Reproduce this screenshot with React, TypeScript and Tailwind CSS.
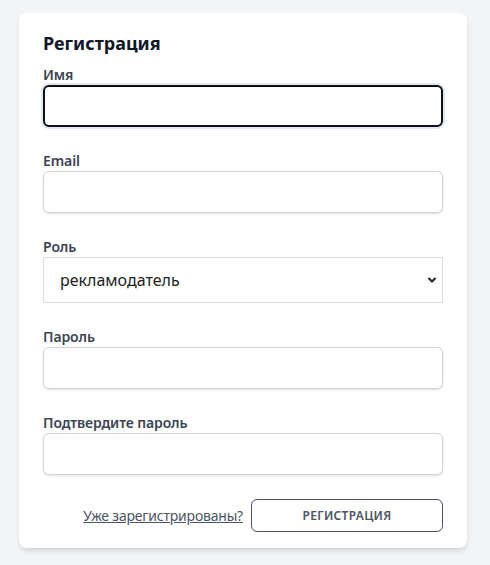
import React from "react";

const font = { fontFamily: '"Noto Sans", "Open Sans", sans-serif' };

function Field({ label, type = "text", focused = false }: { label: string; type?: string; focused?: boolean }) {
  return (
    <div className="mt-6 first:mt-0">
      <label className="block text-sm font-semibold leading-5 tracking-[-0.1px] text-[#3b4452]">{label}</label>
      <input
        type={type}
        className={
          focused
            ? "block h-[42px] w-full rounded-md border-2 border-[#111111] bg-white outline-none ring-2 ring-[#e2e6fb]"
            : "block h-[42px] w-full rounded-md border border-[#d1d5db] bg-white shadow-sm outline-none"
        }
      />
    </div>
  );
}

export default function App() {
  return (
    <div className="min-h-[565px] w-full bg-[#f3f4f6] pt-[13px]" style={font}>
      <div className="mx-[19px] w-[448px] rounded-lg bg-white px-6 py-4 shadow-md">
        <h2 className="mb-2 text-lg font-bold leading-7 text-[#111827]">Регистрация</h2>
        <form>
          <Field label="Имя" focused />
          <Field label="Email" type="email" />
          <div className="mt-6">
            <label className="block text-sm font-semibold leading-5 tracking-[-0.1px] text-[#3b4452]">Роль</label>
            <div className="relative">
              <select className="block h-[46px] w-full appearance-none border border-[#dcdcdc] bg-white pl-4 text-base text-[#222222] outline-none">
                <option>рекламодатель</option>
              </select>
              <svg
                className="pointer-events-none absolute right-[6px] top-[19px]"
                width="10"
                height="8"
                viewBox="0 0 10 8"
              >
                <path d="M1.5 2 L5 5.5 L8.5 2" fill="none" stroke="#1f2937" strokeWidth="2.2" />
              </svg>
            </div>
          </div>
          <Field label="Пароль" type="password" />
          <Field label="Подтвердите пароль" type="password" />
          <div className="mt-6 flex items-center justify-end">
            <a href="#" className="text-sm tracking-[-0.2px] text-[#4b5563] underline">
              Уже зарегистрированы?
            </a>
            <button
              type="button"
              className="ml-2 h-[33px] w-48 rounded-md border border-[#4b5563] bg-white text-xs font-semibold uppercase tracking-wide text-[#4b5563]"
            >
              Регистрация
            </button>
          </div>
        </form>
      </div>
    </div>
  );
}
